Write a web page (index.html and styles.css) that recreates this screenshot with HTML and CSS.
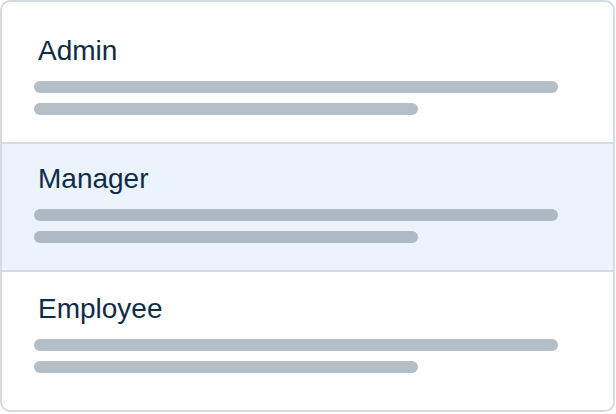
FILE: index.html
```html
<!DOCTYPE html>
<html lang="en">
<head>
<meta charset="utf-8">
<title>Roles</title>
<link rel="stylesheet" href="styles.css">
</head>
<body>
  <ul class="role-list">
    <li class="role role--first">
      <span class="role-name">Admin</span>
      <span class="bar bar--long"></span>
      <span class="bar bar--short"></span>
    </li>
    <li class="role role--active">
      <span class="role-name">Manager</span>
      <span class="bar bar--long"></span>
      <span class="bar bar--short"></span>
    </li>
    <li class="role role--last">
      <span class="role-name">Employee</span>
      <span class="bar bar--long"></span>
      <span class="bar bar--short"></span>
    </li>
  </ul>
</body>
</html>
```
FILE: styles.css
```css
html, body {
  margin: 0;
  padding: 0;
  background: #ffffff;
}

.role-list {
  list-style: none;
  margin: 0;
  padding: 0;
  width: 615px;
  height: 412px;
  box-sizing: border-box;
  border: 2px solid #d5dce1;
  border-radius: 10px;
  overflow: hidden;
  display: flex;
  flex-direction: column;
  font-family: "Liberation Sans", Arial, sans-serif;
}

.role {
  display: flex;
  flex-direction: column;
  align-items: flex-start;
  padding: 0 0 0 32px;
  box-sizing: border-box;
}

.role + .role {
  border-top: 2px solid #d5dce1;
}

.role--first {
  height: 140px;
  padding-top: 33px;
}

.role--active {
  height: 128px;
  padding-top: 19px;
  background: #ebf3fc;
}

.role--last {
  flex: 1;
  padding-top: 21px;
}

.role-name {
  font-size: 28px;
  line-height: 32px;
  color: #0f2c46;
  padding-left: 4px;
  margin-bottom: 14px;
}

.bar {
  display: block;
  height: 12px;
  border-radius: 6px;
  background: #b4bec7;
}

.role--active .bar {
  background: #adb9c3;
}

.bar--long {
  width: 524px;
  margin-bottom: 10px;
}

.bar--short {
  width: 384px;
}
```
